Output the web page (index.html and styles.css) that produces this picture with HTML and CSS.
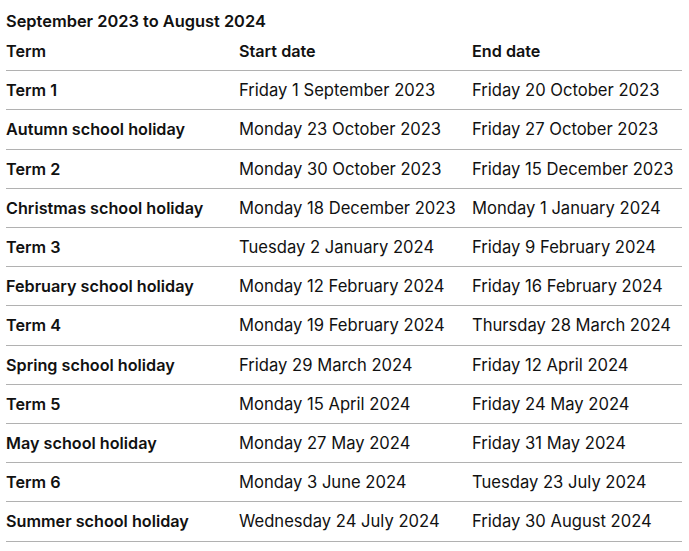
FILE: index.html
```html
<!DOCTYPE html>
<html lang="en">
<head>
<meta charset="utf-8">
<title>Term dates</title>
<link rel="stylesheet" href="styles.css">
</head>
<body>
<table class="terms">
  <caption class="terms-caption">September 2023 to August 2024</caption>
  <thead>
    <tr><th class="c1">Term</th><th class="c2">Start date</th><th class="c3">End date</th></tr>
  </thead>
  <tbody>
    <tr><th>Term 1</th><td>Friday 1 September 2023</td><td>Friday 20 October 2023</td></tr>
    <tr><th>Autumn school holiday</th><td>Monday 23 October 2023</td><td>Friday 27 October 2023</td></tr>
    <tr><th>Term 2</th><td>Monday 30 October 2023</td><td>Friday 15 December 2023</td></tr>
    <tr><th>Christmas school holiday</th><td>Monday 18 December 2023</td><td>Monday 1 January 2024</td></tr>
    <tr><th>Term 3</th><td>Tuesday 2 January 2024</td><td>Friday 9 February 2024</td></tr>
    <tr><th>February school holiday</th><td>Monday 12 February 2024</td><td>Friday 16 February 2024</td></tr>
    <tr><th>Term 4</th><td>Monday 19 February 2024</td><td>Thursday 28 March 2024</td></tr>
    <tr><th>Spring school holiday</th><td>Friday 29 March 2024</td><td>Friday 12 April 2024</td></tr>
    <tr><th>Term 5</th><td>Monday 15 April 2024</td><td>Friday 24 May 2024</td></tr>
    <tr><th>May school holiday</th><td>Monday 27 May 2024</td><td>Friday 31 May 2024</td></tr>
    <tr><th>Term 6</th><td>Monday 3 June 2024</td><td>Tuesday 23 July 2024</td></tr>
    <tr><th>Summer school holiday</th><td>Wednesday 24 July 2024</td><td>Friday 30 August 2024</td></tr>
  </tbody>
</table>
</body>
</html>
```
FILE: styles.css
```css
html, body {
  margin: 0;
  background: #ffffff;
}
body {
  padding: 10px 7px 0 6px;
  font-family: Inter, "Noto Sans", sans-serif;
  font-size: 16.6px;
  color: #111111;
}
.terms {
  width: 676px;
  border-collapse: collapse;
  table-layout: fixed;
}
.terms-caption {
  text-align: left;
  font-weight: 600;
  font-size: 16.4px;
  line-height: 22px;
}
.terms th,
.terms td {
  padding: 8px 0;
  line-height: 22.2px;
  text-align: left;
  vertical-align: top;
  border-bottom: 1px solid #b1b1b1;
  white-space: nowrap;
}
.terms th {
  font-weight: 600;
  font-size: 16.2px;
}
.terms td {
  font-weight: 400;
}
.c1 { width: 233px; }
.c2 { width: 233px; }
.c3 { width: auto; }
```
